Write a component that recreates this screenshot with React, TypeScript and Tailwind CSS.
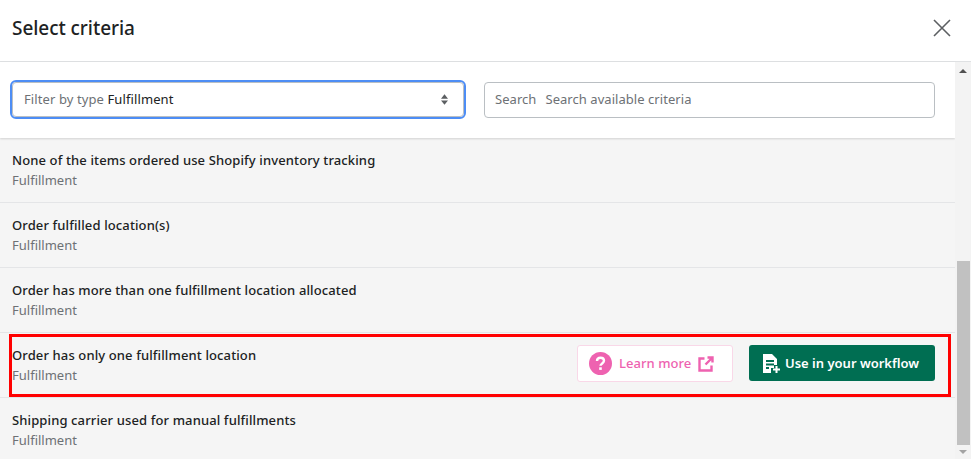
import React from "react";

const Row = ({ title, children }: { title: string; children?: React.ReactNode }) => (
  <div className="h-[65px] border-b border-[#e4e5e7] pl-3 pr-5 flex items-center justify-between shrink-0">
    <div className="flex flex-col gap-[1px] mt-[1px]">
      <div className="text-[13px] leading-[19px] font-medium text-[#202223] tracking-[0.12px]">{title}</div>
      <div className="text-[13px] leading-[19px] text-[#6d7175]">Fulfillment</div>
    </div>
    {children}
  </div>
);

export default function App() {
  return (
    <div className="relative w-[971px] h-[461px] overflow-hidden bg-white font-['Noto_Sans','Open_Sans',sans-serif] flex flex-col">
      <div className="h-[62px] shrink-0 border-b border-[#dfe1e3] flex items-center justify-between pl-3 pr-[20px]">
        <div className="text-[19px] font-medium text-[#202223] -mt-[5px] tracking-[-0.05px]">Select criteria</div>
        <svg width="18" height="18" viewBox="0 0 18 18" className="-mt-[6px]" fill="none" stroke="#5c5f62" strokeWidth="1.6">
          <path d="M1 1 17 17M17 1 1 17" />
        </svg>
      </div>
      <div className="flex-1 flex min-h-0">
        <div className="w-[955px] flex flex-col">
          <div className="h-[76px] shrink-0 bg-white flex items-center gap-[20px] pl-[12px] pr-[20px] shadow-[0_1px_2px_rgba(0,0,0,0.15)] relative">
            <div className="w-[452px] h-[35px] rounded-[4px] bg-white border border-[#babfc3] outline outline-2 outline-[#4d8df5] flex items-center justify-between pl-[11px] pr-[15px] text-[13px] -mt-[1px] tracking-[0.1px]">
              <div className="mt-[1px]">
                <span className="text-[#6d7175]">Filter by type </span>
                <span className="text-[#202223]">Fulfillment</span>
              </div>
              <svg width="7" height="11" viewBox="0 0 8 12" fill="#5c5f62">
                <path d="M4 0 8 5H0zM4 12 0 7h8z" />
              </svg>
            </div>
            <div className="w-[451px] h-[36px] rounded-[4px] bg-white border border-[#babfc3] flex items-center px-[10px] text-[13px] text-[#6d7175] gap-[9px] -mt-[1px] tracking-[0.05px]">
              <span className="mt-[1px]">Search</span>
              <span className="mt-[1px]">Search available criteria</span>
            </div>
          </div>
          <div className="h-[321px] shrink-0 bg-[#f5f5f5] flex flex-col overflow-hidden">
            <Row title="None of the items ordered use Shopify inventory tracking" />
            <Row title="Order fulfilled location(s)" />
            <Row title="Order has more than one fulfillment location allocated" />
            <Row title="Order has only one fulfillment location">
              <div className="flex items-start gap-4 -mt-[3px]">
                <div className="w-[156px] h-[37px] rounded-[3px] bg-white border border-[#f9d8e8] flex items-center pl-[11px] gap-[7px] text-[#ee62b0] text-[13px] font-medium tracking-[0.05px]">
                  <svg width="23" height="23" viewBox="0 0 23 23">
                    <circle cx="11.500" cy="11.500" r="11.500" fill="#ee62b0" />
                    <path d="M8 9c0-2 1.500-3.300 3.500-3.300S15 7 15 8.800c0 2.500-3.500 2.700-3.500 5" fill="none" stroke="#fff" strokeWidth="2.400" />
                    <rect x="10.200" y="15.300" width="2.600" height="2.600" fill="#fff" />
                  </svg>
                  <span>Learn more</span>
                  <svg width="16" height="16" viewBox="0 0 16 16" fill="none" stroke="#ee62b0" strokeWidth="2.400">
                    <path d="M6.500 2.500H1.500v12h12v-5M7.500 8.500 14 2M9.500 1.500h5v5" />
                  </svg>
                </div>
                <div className="w-[186px] h-[36px] rounded-[3px] bg-[#006e52] flex items-center pl-[13px] gap-[3px] text-white text-[13px] font-semibold">
                  <svg width="20" height="21" viewBox="0 0 20 21">
                    <path d="M1 1h9l5 5v6h-3v3H9v5H1z" fill="#fff" />
                    <path d="M4 8h8M4 11.500h8M4 15h3" stroke="#006e52" strokeWidth="1.800" />
                    <path d="M14.500 13v7M11 16.500h7" stroke="#fff" strokeWidth="2" />
                  </svg>
                  <span className="mt-[1px]">Use in your workflow</span>
                </div>
              </div>
            </Row>
            <Row title="Shipping carrier used for manual fulfillments" />
          </div>
        </div>
        <div className="w-[16px] h-[397px] bg-[#f3f3f3] flex flex-col items-center justify-between relative">
          <svg width="8" height="4" viewBox="0 0 8 4" fill="#505050" className="mt-[7px]"><path d="M4 0 8 4H0z" /></svg>
          <div className="absolute left-[2px] right-[1px] top-[199px] h-[184px] bg-[#c1c1c1]" />
          <svg width="8" height="4" viewBox="0 0 8 4" fill="#a3a3a3" className="mb-[5px]"><path d="M0 0h8L4 4z" /></svg>
        </div>
      </div>
      <div className="absolute left-[9px] top-[334px] w-[942px] h-[63px] border-[3px] border-[#ff0000] pointer-events-none" />
    </div>
  );
}
